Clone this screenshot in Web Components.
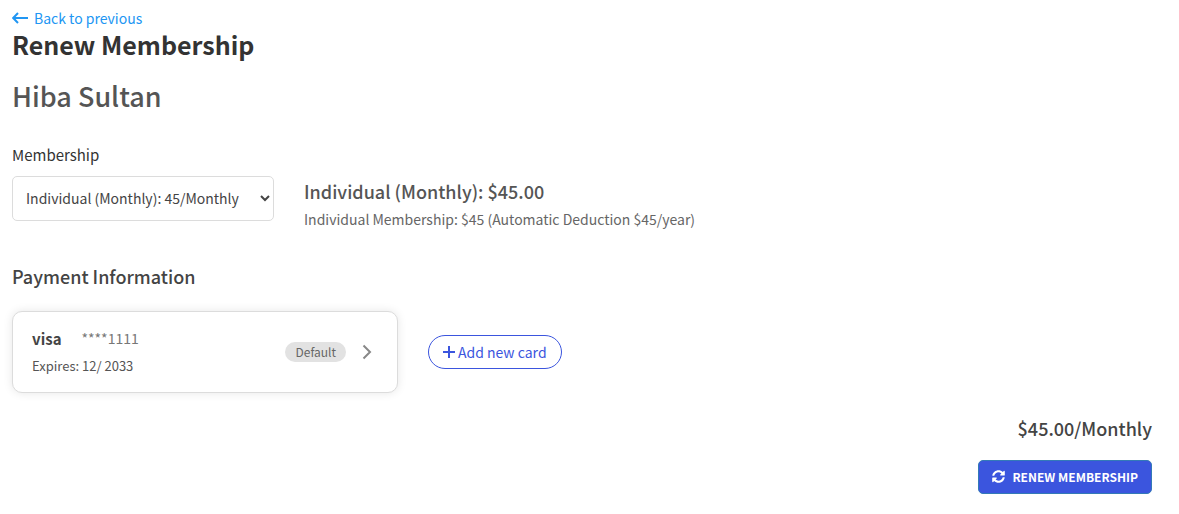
<!DOCTYPE html>
<html lang="en">
<head>
<meta charset="utf-8">
<meta name="viewport" content="width=device-width, initial-scale=1">
<title>Renew Membership</title>
<style>
  body {
    margin: 0;
    background: #fff;
    color: #333;
    font-family: "Noto Sans CJK JP", "Noto Sans CJK SC", sans-serif;
    font-size: 14px;
    --blue: #3b55de;
    --line: #dcdcdc;
  }
</style>
</head>
<body>
<renew-page></renew-page>

<script>
const define = (name, html, setup) => {
  const template = document.createElement('template');
  template.innerHTML = html;
  customElements.define(name, class extends HTMLElement {
    constructor() {
      super();
      this.attachShadow({ mode: 'open' }).append(template.content.cloneNode(true));
      if (setup) setup(this.shadowRoot);
    }
  });
};

define('back-link', `
  <style>
    :host { display: flex; }
    a { display: inline-flex; align-items: center; gap: 6px; color: #2196f3; font-size: 14px; line-height: 20px; text-decoration: none; }
    svg { width: 16px; height: 12px; }
  </style>
  <a href="#previous">
    <svg viewBox="0 0 16 12" fill="none" stroke="currentColor" stroke-width="2" aria-hidden="true"><path d="M6 1 1.2 6 6 11M1.2 6H16"/></svg>
    <slot></slot>
  </a>`);

define('page-header', `
  <style>
    :host { display: block; }
    h1, h2 { margin: 0; }
    h1 { font-size: 25px; font-weight: 700; line-height: 32px; }
    h2 { margin-top: 15px; color: #555; font-size: 27px; font-weight: 500; line-height: 42px; }
  </style>
  <h1><slot></slot></h1>
  <h2><slot name="member"></slot></h2>`);

define('plan-select', `
  <style>
    :host { display: flex; flex-wrap: wrap; align-items: flex-end; gap: 9px 30px; }
    .field { display: flex; flex-direction: column; gap: 9px; width: 262px; }
    label { font-size: 15px; line-height: 24px; }
    select { box-sizing: border-box; width: 100%; height: 45px; padding: 0 0 2px 9px; border: 1px solid var(--line); border-radius: 5px; background: #fff; color: #444; font: inherit; }
    .plan { height: 45px; }
    h3 { margin: 0; padding-top: 1px; color: #555; font-size: 18px; font-weight: 500; line-height: 28px; }
    p { margin: 0; color: #666; font-size: 14px; line-height: 28px; }
  </style>
  <div class="field">
    <label for="plan">Membership</label>
    <select id="plan"><option>Individual (Monthly): 45/Monthly</option></select>
  </div>
  <div class="plan">
    <h3><slot name="title"></slot></h3>
    <p><slot></slot></p>
  </div>`);

define('status-badge', `
  <style>
    :host { padding: 0 10px; border-radius: 10px; background: #e2e2e2; color: #666; font-size: 12px; line-height: 20px; }
  </style>
  <slot></slot>`);

define('payment-card', `
  <style>
    :host { display: block; width: 386px; max-width: 100%; }
    button { display: flex; align-items: center; box-sizing: border-box; width: 100%; padding: 13px 25px 13px 19px; border: 1px solid var(--line); border-radius: 10px; background: #fff; box-shadow: 0 0 10px rgb(0 0 0 / 10%); color: #555; font: inherit; text-align: left; }
    .details { flex: 1; line-height: 27px; font-size: 13px; }
    .top { display: flex; gap: 20px; }
    .brand { color: #444; font-size: 15px; font-weight: 700; }
    .number { color: #777; font-size: 14px; }
    svg { width: 10px; height: 16px; margin-left: 16px; color: #888; }
  </style>
  <button type="button">
    <span class="details">
      <span class="top"><span class="brand"><slot name="brand"></slot></span><span class="number"><slot name="number"></slot></span></span>
      <slot></slot>
    </span>
    <slot name="status"></slot>
    <svg viewBox="0 0 10 16" fill="none" stroke="currentColor" stroke-width="2" aria-hidden="true"><path d="m1.5 1.5 6.5 6.5-6.5 6.5"/></svg>
  </button>`);

define('add-card-button', `
  <style>
    :host { display: block; }
    button { display: flex; align-items: center; gap: 3px; height: 34px; padding: 0 14px; border: 1px solid var(--blue); border-radius: 17px; background: #fff; color: var(--blue); font: inherit; }
    svg { width: 12px; height: 12px; }
  </style>
  <button type="button">
    <svg viewBox="0 0 12 12" fill="none" stroke="currentColor" stroke-width="2" aria-hidden="true"><path d="M6 0v12M0 6h12"/></svg>
    <slot></slot>
  </button>`);

define('renew-button', `
  <style>
    :host { display: block; }
    button { display: flex; align-items: center; gap: 7px; height: 34px; padding: 0 13px 2px; border: 1px solid #337ab7; border-radius: 5px; background: var(--blue); color: #fff; font: inherit; font-size: 12px; font-weight: 700; text-transform: uppercase; }
    svg { width: 13px; height: 13px; }
  </style>
  <button type="submit">
    <svg viewBox="0 0 512 512" fill="currentColor" aria-hidden="true"><path d="M370.720 133.280C339.458 104.008 298.888 87.962 255.848 88c-77.458.068-144.328 53.178-162.791 126.850-1.344 5.363-6.122 9.150-11.651 9.150H24.103c-7.498 0-13.194-6.807-11.807-14.176C33.933 94.924 134.813 8 256 8c66.448 0 126.791 26.136 171.315 68.685L463.030 40.970C478.149 25.851 504 36.559 504 57.941V192c0 13.255-10.745 24-24 24H345.941c-21.382 0-32.090-25.851-16.971-40.971l41.750-41.749zM32 296h134.059c21.382 0 32.090 25.851 16.971 40.971l-41.750 41.750c31.262 29.273 71.835 45.319 114.876 45.280 77.418-.070 144.315-53.144 162.787-126.849 1.344-5.363 6.122-9.150 11.651-9.150h57.304c7.498 0 13.194 6.807 11.807 14.176C478.067 417.076 377.187 504 256 504c-66.448 0-126.791-26.136-171.315-68.685L48.970 471.030C33.851 486.149 8 475.441 8 454.059V320c0-13.255 10.745-24 24-24z"/></svg>
    <slot></slot>
  </button>`);

define('renew-page', `
  <style>
    :host { display: block; }
    main { padding: 8px 27px 20px 12px; }
    plan-select { margin-top: 26px; }
    h3 { margin: 41px 0 21px; color: #444; font-size: 18px; font-weight: 500; line-height: 28px; }
    .methods { display: flex; flex-wrap: wrap; align-items: center; gap: 20px 30px; }
    footer { display: flex; flex-direction: column; align-items: flex-end; gap: 18px; margin-top: 21px; }
    .total { color: #444; font-size: 18px; font-weight: 500; line-height: 28px; }
  </style>
  <main>
    <back-link>Back to previous</back-link>
    <page-header>Renew Membership<span slot="member">Hiba Sultan</span></page-header>
    <plan-select>
      <span slot="title">Individual (Monthly): $45.00</span>Individual Membership: $45 (Automatic Deduction $45/year)
    </plan-select>
    <h3>Payment Information</h3>
    <div class="methods">
      <payment-card>
        <span slot="brand">visa</span>
        <span slot="number">****1111</span>
        <status-badge slot="status">Default</status-badge>
        Expires: 12/ 2033
      </payment-card>
      <add-card-button>Add new card</add-card-button>
    </div>
    <footer>
      <span class="total">$45.00/Monthly</span>
      <renew-button>Renew Membership</renew-button>
    </footer>
  </main>`);
</script>
</body>
</html>
